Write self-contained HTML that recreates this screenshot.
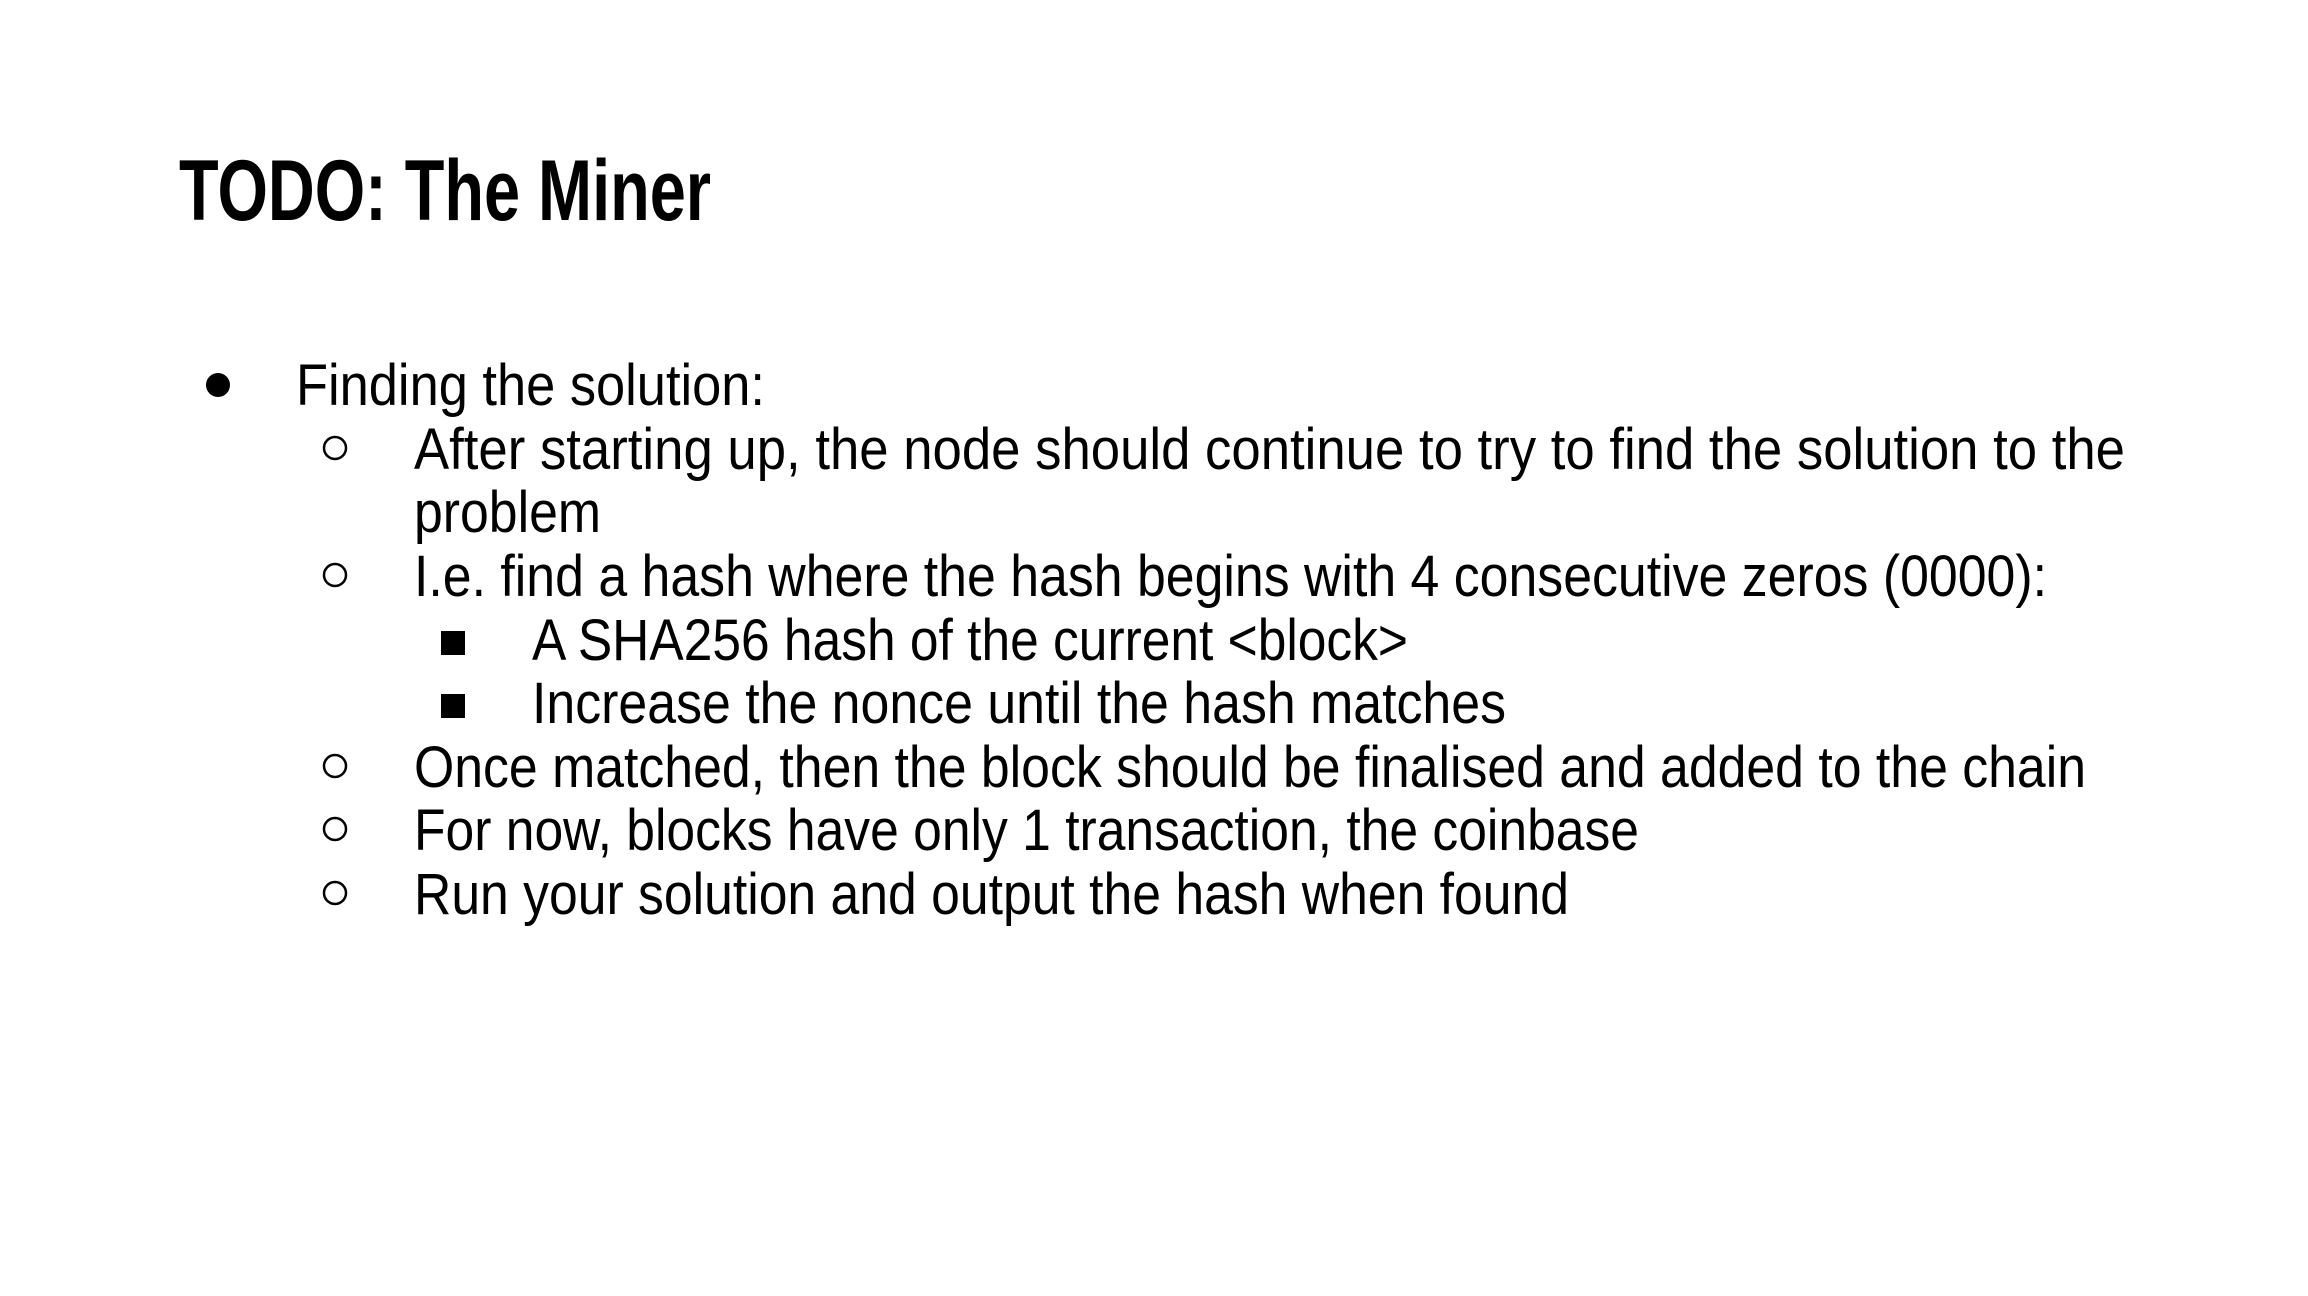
<!DOCTYPE html>
<html><head><meta charset="utf-8">
<style>
html,body{margin:0;padding:0;background:#fff;width:2308px;height:1296px;overflow:hidden}
svg text{font-family:"Liberation Sans Narrow","Liberation Sans",sans-serif;fill:#000}
</style></head>
<body>
<svg width="2308" height="1296" viewBox="0 0 2308 1296" xmlns="http://www.w3.org/2000/svg">
<g transform="translate(0,-4)">
<text x="179" y="224" font-size="86" font-weight="bold" textLength="532" lengthAdjust="spacingAndGlyphs">TODO: The Miner</text>

<circle cx="218" cy="389" r="12" fill="#000"/>
<text x="296" y="409" font-size="58" textLength="469" lengthAdjust="spacingAndGlyphs">Finding the solution:</text>

<circle cx="335" cy="452" r="11" fill="none" stroke="#000" stroke-width="2.5"/>
<text x="414" y="473" font-size="58" textLength="1711" lengthAdjust="spacingAndGlyphs">After starting up, the node should continue to try to find the solution to the</text>
<text x="414" y="536" font-size="58" textLength="187" lengthAdjust="spacingAndGlyphs">problem</text>

<circle cx="335" cy="579" r="11" fill="none" stroke="#000" stroke-width="2.5"/>
<text x="414" y="600" font-size="58" textLength="1633" lengthAdjust="spacingAndGlyphs">I.e. find a hash where the hash begins with 4 consecutive zeros (0000):</text>

<rect x="441" y="635" width="24" height="24" fill="#000"/>
<text x="532" y="664" font-size="58" textLength="876" lengthAdjust="spacingAndGlyphs">A SHA256 hash of the current &lt;block&gt;</text>

<rect x="441" y="698" width="24" height="24" fill="#000"/>
<text x="532" y="727" font-size="58" textLength="974" lengthAdjust="spacingAndGlyphs">Increase the nonce until the hash matches</text>

<circle cx="335" cy="770" r="11" fill="none" stroke="#000" stroke-width="2.5"/>
<text x="414" y="791" font-size="58" textLength="1672" lengthAdjust="spacingAndGlyphs">Once matched, then the block should be finalised and added to the chain</text>

<circle cx="335" cy="833" r="11" fill="none" stroke="#000" stroke-width="2.5"/>
<text x="414" y="854" font-size="58" textLength="1225" lengthAdjust="spacingAndGlyphs">For now, blocks have only 1 transaction, the coinbase</text>

<circle cx="335" cy="897" r="11" fill="none" stroke="#000" stroke-width="2.5"/>
<text x="414" y="918" font-size="58" textLength="1155" lengthAdjust="spacingAndGlyphs">Run your solution and output the hash when found</text>
</g>
</svg>
</body></html>
